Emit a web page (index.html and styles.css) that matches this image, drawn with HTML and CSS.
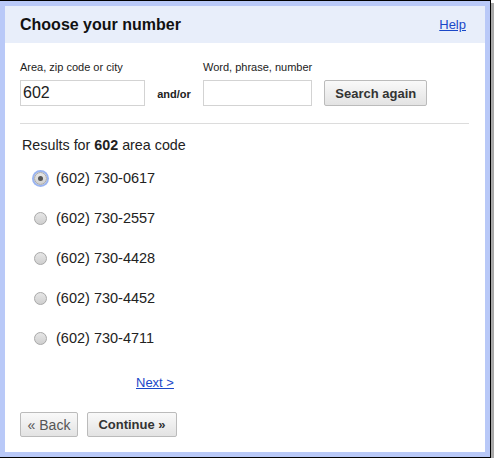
FILE: index.html
```html
<!DOCTYPE html>
<html>
<head>
<meta charset="utf-8">
<link rel="stylesheet" href="styles.css">
</head>
<body>
<div class="frame">
  <div class="panel">
    <div class="header">
      <span class="title">Choose your number</span>
      <a class="help" href="#">Help</a>
    </div>
    <div class="search">
      <div class="field">
        <label class="lbl">Area, zip code or city</label>
        <div class="input wide">602</div>
      </div>
      <div class="andor">and/or</div>
      <div class="field">
        <label class="lbl">Word, phrase, number</label>
        <div class="input narrow"></div>
      </div>
      <div class="btn search-btn">Search again</div>
    </div>
    <div class="divider"></div>
    <div class="results">Results for <b>602</b> area code</div>
    <div class="list">
      <div class="row"><span class="radio on"><span class="dot"></span></span><span class="num">(602) 730-0617</span></div>
      <div class="row"><span class="radio"></span><span class="num">(602) 730-2557</span></div>
      <div class="row"><span class="radio"></span><span class="num">(602) 730-4428</span></div>
      <div class="row"><span class="radio"></span><span class="num">(602) 730-4452</span></div>
      <div class="row"><span class="radio"></span><span class="num">(602) 730-4711</span></div>
    </div>
    <div class="next"><a href="#">Next &gt;</a></div>
    <div class="actions">
      <div class="btn back">« Back</div>
      <div class="btn cont">Continue »</div>
    </div>
  </div>
</div>
</body>
</html>
```
FILE: styles.css
```css
html, body { margin: 0; padding: 0; background: #fff; }
body { font-family: "Liberation Sans", Arial, sans-serif; color: #222; }
.frame {
  width: 480px;
  height: 446px;
  padding: 5px;
  background: #b9c9f8;
  border-top: 1px solid #000;
  border-right: 1px solid #000;
  border-bottom: 1px solid #000;
  box-shadow: 3px 3px 0 #a9a9a9;
}
.panel { background: #fff; height: 446px; display: flex; flex-direction: column; }
.header {
  height: 37px;
  background: #e8eefa;
  display: flex;
  align-items: center;
  justify-content: space-between;
  padding: 0 19px 0 15px;
}
.title { font-size: 16px; font-weight: bold; color: #111; }
.help { font-size: 13px; color: #1a47c8; text-decoration: underline; }
.search { display: flex; align-items: flex-end; padding: 18px 0 0 15px; }
.field { display: flex; flex-direction: column; }
.lbl { font-size: 11px; color: #222; line-height: 13px; margin-bottom: 6px; }
.input {
  height: 24px;
  border: 1px solid #d3d3d3;
  box-sizing: content-box;
  font-size: 16px;
  line-height: 24px;
  padding-left: 2px;
  color: #222;
}
.wide { width: 121px; }
.narrow { width: 105px; }
.andor { font-size: 11px; font-weight: bold; width: 58px; text-align: center; padding-bottom: 6px; }
.btn {
  border: 1px solid #bbb;
  border-radius: 2px;
  background: linear-gradient(#f9f9f9, #e3e3e3);
  font-size: 13px;
  color: #333;
  display: flex;
  align-items: center;
  justify-content: center;
  box-sizing: border-box;
}
.search-btn { width: 103px; height: 26px; font-weight: bold; margin-left: 12px; margin-bottom: 0; }
.divider { height: 1px; background: #dcdcdc; margin: 17px 16px 0 15px; }
.results { font-size: 14.3px; padding: 13px 0 0 17px; line-height: 16px; }
.list { padding: 17px 0 0 29px; }
.row { height: 40px; display: flex; align-items: flex-start; }
.radio {
  width: 11px; height: 11px;
  border-radius: 50%;
  border: 1px solid #a8a8a8;
  background: linear-gradient(#e6e6e6, #cfcfcf);
  margin-top: 2px;
  position: relative;
  flex: none;
}
.radio.on { box-shadow: 0 0 0 2px #9ab4f0; }
.radio.on .dot {
  position: absolute; left: 3px; top: 3px; width: 5px; height: 5px;
  border-radius: 50%; background: #555;
}
.num { font-size: 14.5px; margin-left: 9px; line-height: 16px; color: #222; }
.next { padding: 5px 0 0 131px; font-size: 13px; }
.next a { color: #1a47c8; }
.actions { display: flex; gap: 9px; padding: 22px 0 0 15px; }
.back { width: 58px; height: 25px; font-size: 14px; color: #555; }
.cont { width: 90px; height: 25px; font-size: 13px; font-weight: bold; }
```
